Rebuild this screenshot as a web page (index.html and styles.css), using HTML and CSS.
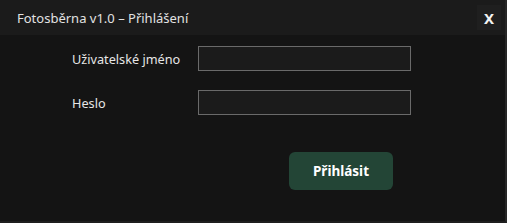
FILE: index.html
```html
<!DOCTYPE html>
<html lang="cs">
<head>
<meta charset="utf-8">
<title>Fotosběrna v1.0 – Přihlášení</title>
<link rel="stylesheet" href="styles.css">
</head>
<body>
<div class="window">
  <div class="titlebar">
    <span class="title">Fotosběrna v1.0 – Přihlášení</span>
    <button class="close">X</button>
  </div>
  <div class="content">
    <div class="form">
      <label class="label" for="user">Uživatelské jméno</label>
      <input class="field" id="user" type="text">
      <label class="label" for="pass">Heslo</label>
      <input class="field" id="pass" type="password">
    </div>
    <div class="actions">
      <button class="login">Přihlásit</button>
    </div>
  </div>
</div>
</body>
</html>
```
FILE: styles.css
```css
html, body {
  margin: 0;
  padding: 0;
  background: #141414;
}
.window {
  width: 505px;
  height: 221px;
  background: #141414;
  border-right: 2px solid #262626;
  border-bottom: 2px solid #1e1e1e;
  font-family: "Noto Sans", "Liberation Sans", sans-serif;
  color: #e6e6e6;
  overflow: hidden;
}
.titlebar {
  height: 35px;
  background: #1b1b1b;
  display: flex;
  align-items: flex-start;
  justify-content: space-between;
  padding-left: 17px;
  padding-right: 4px;
}
.title {
  font-size: 13px;
  line-height: 15px;
  margin-top: 11px;
  color: #e2e2e2;
}
.close {
  margin-top: 5px;
  width: 24px;
  height: 25px;
  border: none;
  background: #1f1f1f;
  color: #f2f2f2;
  font-family: "Noto Sans", "Liberation Sans", sans-serif;
  font-weight: 700;
  font-size: 15px;
  padding: 2px 0 0;
  line-height: 23px;
}
.content {
  padding-top: 11px;
  padding-left: 72px;
}
.form {
  display: grid;
  grid-template-columns: 126px 213px;
  row-gap: 19px;
  align-items: center;
}
.label {
  font-size: 12.7px;
  color: #e6e6e6;
}
.field {
  box-sizing: border-box;
  width: 213px;
  height: 25px;
  margin: 0;
  background: #1b1b1b;
  border: 1px solid #6a6a6a;
  color: #fff;
  outline: none;
}
.actions {
  padding-top: 37px;
  padding-left: 217px;
}
.login {
  width: 104px;
  height: 38px;
  border: none;
  border-radius: 6px;
  background: #234536;
  color: #fff;
  font-family: "Noto Sans", "Liberation Sans", sans-serif;
  font-weight: 700;
  font-size: 13.5px;
  padding: 0;
}
```
